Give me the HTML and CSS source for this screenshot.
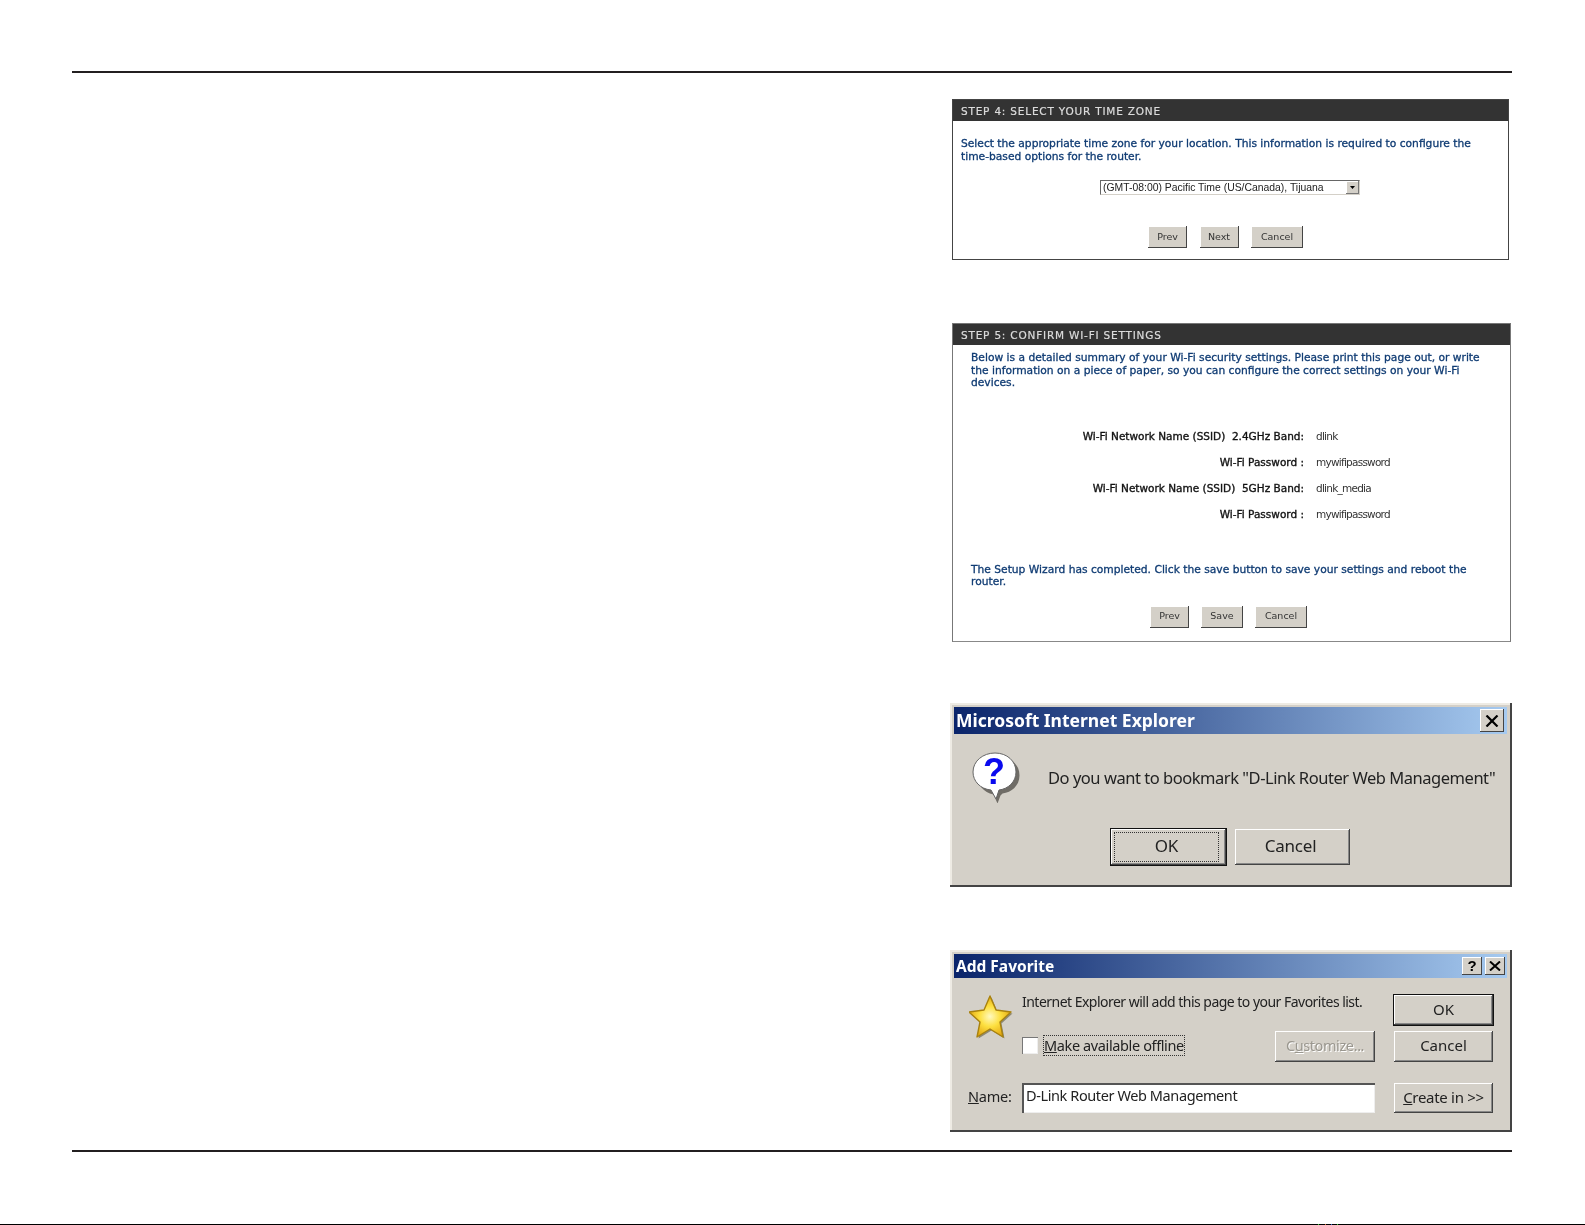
FILE: index.html
```html
<!DOCTYPE html>
<html lang="en">
<head>
<meta charset="utf-8">
<title>D-Link Setup Wizard</title>
<link rel="stylesheet" href="styles.css">
</head>
<body>
<div class="page">
  <div class="rule rule-top"></div>
  <main class="column">
    <section class="step step4">
      <h2 class="step-head">STEP 4: SELECT YOUR TIME ZONE</h2>
      <p class="info info4">Select the appropriate time zone for your location. This information is required to configure the time-based options for the router.</p>
      <div class="select-row">
        <div class="select"><span class="select-text">(GMT-08:00) Pacific Time (US/Canada), Tijuana</span><span class="select-btn"><svg width="5" height="3" viewBox="0 0 5 3"><path d="M0 0h5L2.5 3z" fill="#000"/></svg></span></div>
      </div>
      <div class="step-btns btns4">
        <button class="web-btn w-prev">Prev</button>
        <button class="web-btn w-prev">Next</button>
        <button class="web-btn w-cancel">Cancel</button>
      </div>
    </section>

    <section class="step step5">
      <h2 class="step-head">STEP 5: CONFIRM WI-FI SETTINGS</h2>
      <p class="info info5">Below is a detailed summary of your Wi-Fi security settings. Please print this page out, or write the information on a piece of paper, so you can configure the correct settings on your Wi-Fi devices.</p>
      <dl class="summary">
        <dt>Wi-Fi Network Name (SSID)&nbsp; 2.4GHz Band:</dt><dd>dlink</dd>
        <dt>Wi-Fi Password :</dt><dd>mywifipassword</dd>
        <dt>Wi-Fi Network Name (SSID)&nbsp; 5GHz Band:</dt><dd>dlink_media</dd>
        <dt>Wi-Fi Password :</dt><dd>mywifipassword</dd>
      </dl>
      <p class="info info5b">The Setup Wizard has completed. Click the save button to save your settings and reboot the router.</p>
      <div class="step-btns btns5">
        <button class="web-btn w-prev">Prev</button>
        <button class="web-btn w-save">Save</button>
        <button class="web-btn w-cancel">Cancel</button>
      </div>
    </section>

    <section class="dialog ie">
      <header class="title ie-title"><span>Microsoft Internet Explorer</span><span class="cap-btn cap-big"><svg width="14" height="12" viewBox="0 0 14 12"><path d="M1.5 .5l11 11M12.5 .5l-11 11" stroke="#000" stroke-width="2.2" fill="none"/></svg></span></header>
      <div class="ie-body">
        <svg class="ie-icon" width="52" height="52" viewBox="0 0 52 52">
          <path d="M26 3C38 3 47 11 47 22c0 10-8 17-17 18l-2 2-3 8-4-9C11 39 5 31 5 22 5 11 14 3 26 3z" fill="#6f6c66" transform="translate(2.5 2.5)"/>
          <path d="M25 2C37 2 46 10 46 21c0 10-8 17-17 18l-3 9-5-9C10 38 3 30 3 21 3 10 13 2 25 2z" fill="#fff" stroke="#666" stroke-width="1"/>
          <text x="24" y="33" class="ie-q">?</text>
        </svg>
        <p class="ie-msg">Do you want to bookmark "D-Link Router Web Management"</p>
      </div>
      <div class="ie-btns">
        <button class="win-btn ie-btn is-default"><span class="focus">OK</span></button>
        <button class="win-btn ie-btn">Cancel</button>
      </div>
    </section>

    <section class="dialog fav">
      <header class="title fav-title"><span>Add Favorite</span><span class="cap-group"><span class="cap-btn">?</span><span class="cap-btn"><svg width="12" height="10" viewBox="0 0 12 10"><path d="M1 .5l10 9M11 .5l-10 9" stroke="#000" stroke-width="2" fill="none"/></svg></span></span></header>
      <div class="fav-grid">
        <svg class="star" width="44" height="44" viewBox="0 0 44 44">
          <defs><radialGradient id="sg" cx=".5" cy=".5" r=".55"><stop offset="0" stop-color="#fff9c0"/><stop offset=".45" stop-color="#fde040"/><stop offset="1" stop-color="#e0a00c"/></radialGradient></defs>
          <path d="M21 1l6 14 15 2-11 10 3 15-13-8-13 8 3-15L0 17l15-2z" fill="#6f6a50" transform="translate(1.5 1.5)" opacity=".7"/>
          <path d="M21 1l6 14 15 2-11 10 3 15-13-8-13 8 3-15L0 17l15-2z" fill="url(#sg)" stroke="#a8820f" stroke-width="1.4" stroke-linejoin="round"/>
        </svg>
        <p class="fav-msg">Internet Explorer will add this page to your Favorites list.</p>
        <button class="win-btn fav-ok is-default">OK</button>
        <div class="fav-check"><span class="check"></span><span class="focus check-label"><u>M</u>ake available offline</span></div>
        <button class="win-btn fav-custom is-disabled">C<u>u</u>stomize...</button>
        <button class="win-btn fav-cancel">Cancel</button>
        <label class="fav-name"><u>N</u>ame:</label>
        <div class="fav-input">D-Link Router Web Management</div>
        <button class="win-btn fav-create"><u>C</u>reate in &gt;&gt;</button>
      </div>
    </section>
  </main>
  <div class="rule rule-bottom"></div>
  <div class="edge"><i class="dot d1"></i><i class="dot d2"></i><i class="dot d3"></i><i class="dot d4"></i></div>
</div>
</body>
</html>
```
FILE: styles.css
```css
* { box-sizing: border-box; }
html, body { margin: 0; padding: 0; background: #fff; }
.page { width: 1585px; height: 1225px; position: relative; overflow: hidden; padding-top: 71px; }
.rule { height: 2px; background: #231f20; margin-left: 72px; width: 1440px; }
.column { margin-left: 950px; width: 562px; height: 1077px; padding-top: 26px; }

/* Web-UI panels */
.step { border: 1px solid #444; margin-left: 2px; background: #fff; font-family: "DejaVu Sans", sans-serif; filter: blur(.25px); }
.step4 { width: 557px; height: 161px; }
.step5 { width: 559px; height: 319px; margin-top: 63px; border-color: #777 #777 #888; }
.step-head { margin: 0; height: 21px; background: #333; color: #ddd; font: 400 10.5px/22px "DejaVu Sans", sans-serif; letter-spacing: .8px; -webkit-text-stroke: .2px #ddd; padding-left: 8px; }
.info { margin: 0; color: #0f3b73; font: 400 10.7px/12.5px "DejaVu Sans", sans-serif; -webkit-text-stroke: .3px #0f3b73; }
.info4 { padding: 17px 20px 0 8px; }
.select-row { padding-top: 17px; padding-left: 147px; }
.select { width: 260px; height: 15px; border: 1px solid #777; border-color: #666 #d4d0c8 #d4d0c8 #666; display: flex; justify-content: space-between; align-items: center; font: 400 10.4px/13px "Liberation Sans", sans-serif; color: #222; padding-left: 2px; }
.select-text { white-space: nowrap; }
.select-btn { width: 13px; height: 13px; background: #d4d0c8; display: flex; align-items: center; justify-content: center; box-shadow: inset -1px -1px #777, inset 1px 1px #fff; }
.step-btns { display: flex; gap: 13px; }
.btns4 { padding: 31px 0 0 195px; gap: 12.5px; }
.btns5 { padding: 17px 0 0 197px; gap: 12px; }
.web-btn { height: 22px; padding: 0 0 1px; border: 0; background: #d4d0c8; color: #333; font: 400 9.5px/20px "DejaVu Sans", sans-serif; box-shadow: inset -1px -1px #444, inset 1px 1px #fff; }
.w-prev { width: 39px; }
.w-save { width: 42px; }
.w-cancel { width: 52px; }
.info5 { padding: 7px 20px 0 18px; }
.summary { display: grid; grid-template-columns: 351px 1fr; grid-auto-rows: 26px; margin: 33px 0 0; column-gap: 12px; align-items: center; font: 400 10.5px/14px "DejaVu Sans", sans-serif; }
.summary dt { text-align: right; color: #111; -webkit-text-stroke: .35px #111; white-space: nowrap; }
.summary dd { margin: 0; color: #333; letter-spacing: -.75px; }
.info5b { padding: 37px 20px 0 18px; }

/* Windows dialogs */
.dialog { background: #d4d0c8; font-family: "Noto Sans", sans-serif; color: #222; box-shadow: inset -2px -2px #444, inset 2px 2px #eeebe4; padding: 4px 5px 0 4px; filter: blur(.4px); }
.ie { height: 184px; margin-top: 61px; }
.fav { height: 182px; margin-top: 63px; }
.title { background: linear-gradient(90deg, #0a246a 0%, #a6caf0 100%); color: #fff; font-weight: 700; display: flex; justify-content: space-between; align-items: center; padding: 0 3px 0 2px; white-space: nowrap; }
.ie-title { height: 27px; font-size: 17.5px; line-height: 25px; }
.fav-title { height: 24px; font-size: 15.5px; padding-right: 2px; }
.cap-group { display: flex; gap: 3px; }
.cap-btn { width: 20px; height: 18px; background: #d4d0c8; color: #000; font: 700 15px/18px "Liberation Sans", sans-serif; text-align: center; display: flex; align-items: center; justify-content: center; box-shadow: inset -1px -1px #444, inset 1px 1px #fff; }
.cap-big { width: 24px; height: 23px; }
.ie-body { display: flex; align-items: flex-start; padding: 17px 0 0 16px; height: 95px; }
.ie-icon { flex: none; }
.ie-q { font: 700 36px "Liberation Sans", sans-serif; fill: #0a0aee; text-anchor: middle; }
.ie-msg { margin: 16px 0 0 26px; font-size: 16.5px; line-height: 22px; white-space: nowrap; letter-spacing: -.47px; }
.ie-btns { display: flex; gap: 9px; padding-left: 157px; }
.win-btn { border: 0; background: #d4d0c8; color: #222; padding: 0 0 3px; font-family: "Noto Sans", sans-serif; box-shadow: inset -1px -1px #444, inset 1px 1px #fff, inset -2px -2px #888; }
.ie-btn { width: 115px; height: 36px; font-size: 17px; padding: 0 4px 3px 0; letter-spacing: -.2px; }
.ie-btn.is-default { padding-bottom: 0; }
.is-default { box-shadow: 0 0 0 1px #111, inset -1px -1px #444, inset 1px 1px #fff, inset -2px -2px #888; }
.focus { outline: 1px dotted #333; }
.ie-btn .focus { display: block; margin: 4px; height: 28px; line-height: 26px; }
.fav-grid { display: grid; grid-template-columns: 54px 253px 100px 19px 99px; grid-template-rows: 30px 31px 9px 30px; row-gap: 6px; padding: 17px 0 0 14px; }
.star { grid-column: 1; grid-row: 1 / span 2; margin-left: 1px; }
.fav-msg { grid-column: 2 / span 2; grid-row: 1; margin: 0; font-size: 14px; line-height: 14px; white-space: nowrap; letter-spacing: -.52px; }
.fav-ok { grid-column: 5; grid-row: 1; font-size: 15px; }
.fav-check { grid-column: 2; grid-row: 2; display: flex; align-items: center; gap: 6px; font-size: 14.5px; padding-bottom: 2px; }
.check { width: 16px; height: 17px; background: #fff; box-shadow: inset 1px 1px #777, inset -1px -1px #eee; flex: none; }
.check-label { line-height: 19px; white-space: nowrap; letter-spacing: -.38px; }
.fav-custom { grid-column: 3; grid-row: 2; font-size: 14.5px; letter-spacing: -.4px; }
.is-disabled { color: #9a978f; text-shadow: 1px 1px #fff; }
.fav-cancel { grid-column: 5; grid-row: 2; font-size: 15px; }
.fav-name { grid-column: 1; grid-row: 4; font-size: 14.5px; line-height: 26px; letter-spacing: -.2px; }
.fav-input { grid-column: 2 / span 2; grid-row: 4; background: #fff; font-size: 14.5px; line-height: 24px; padding-left: 4px; letter-spacing: -.4px; box-shadow: inset 2px 2px #555, inset -1px -1px #eee; }
.fav-create { grid-column: 5; grid-row: 4; font-size: 15px; letter-spacing: -.3px; }

/* Footer */
.edge { height: 1px; background: #000; position: absolute; left: 0; right: 0; bottom: 0; display: flex; }
.dot { width: 1px; height: 1px; }
.d1 { margin-left: 1318px; background: #3c3; }
.d2 { margin-left: 6px; background: #c63; }
.d3 { margin-left: 5px; background: #36c; }
.d4 { margin-left: 5px; background: #3c3; }
```
